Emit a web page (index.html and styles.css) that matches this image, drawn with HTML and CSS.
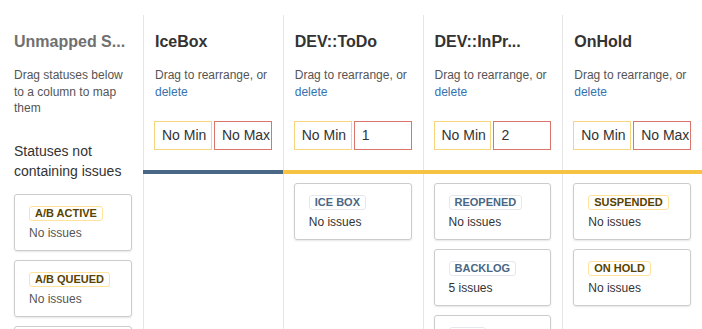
FILE: index.html
```html
<!DOCTYPE html>
<html lang="en">
<head>
  <meta charset="UTF-8">
  <meta name="viewport" content="width=device-width, initial-scale=1.0">
  <title>Board Columns</title>
  <link rel="stylesheet" href="styles.css">
</head>
<body>
  <div class="board">
    <div class="column unmapped">
      <div class="column-header">
        <h2 class="muted">Unmapped S...</h2>
        <p class="hint">Drag statuses below to a column to map them</p>
      </div>
      <div class="section-title">Statuses not containing issues</div>
      <div class="cards">
        <div class="card">
          <span class="lozenge yellow">A/B Active</span>
          <div class="count">No issues</div>
        </div>
        <div class="card">
          <span class="lozenge yellow">A/B Queued</span>
          <div class="count">No issues</div>
        </div>
        <div class="card"></div>
      </div>
    </div>

    <div class="column">
      <div class="column-header">
        <h2>IceBox</h2>
        <p class="hint">Drag to rearrange, or <a href="#">delete</a></p>
        <div class="limits">
          <div class="limit min">No Min</div>
          <div class="limit max">No Max</div>
        </div>
      </div>
      <div class="bar blue"></div>
    </div>

    <div class="column">
      <div class="column-header">
        <h2>DEV::ToDo</h2>
        <p class="hint">Drag to rearrange, or <a href="#">delete</a></p>
        <div class="limits">
          <div class="limit min">No Min</div>
          <div class="limit max">1</div>
        </div>
      </div>
      <div class="bar yellow"></div>
      <div class="cards">
        <div class="card">
          <span class="lozenge blue">Ice Box</span>
          <div class="count">No issues</div>
        </div>
      </div>
    </div>

    <div class="column">
      <div class="column-header">
        <h2>DEV::InPr...</h2>
        <p class="hint">Drag to rearrange, or <a href="#">delete</a></p>
        <div class="limits">
          <div class="limit min">No Min</div>
          <div class="limit max">2</div>
        </div>
      </div>
      <div class="bar yellow"></div>
      <div class="cards">
        <div class="card">
          <span class="lozenge blue">Reopened</span>
          <div class="count">No issues</div>
        </div>
        <div class="card">
          <span class="lozenge blue">Backlog</span>
          <div class="count">5 issues</div>
        </div>
        <div class="card">
          <span class="lozenge blue placeholder"></span>
        </div>
      </div>
    </div>

    <div class="column">
      <div class="column-header">
        <h2>OnHold</h2>
        <p class="hint">Drag to rearrange, or <a href="#">delete</a></p>
        <div class="limits">
          <div class="limit min">No Min</div>
          <div class="limit max">No Max</div>
        </div>
      </div>
      <div class="bar yellow"></div>
      <div class="cards">
        <div class="card">
          <span class="lozenge yellow">Suspended</span>
          <div class="count">No issues</div>
        </div>
        <div class="card">
          <span class="lozenge yellow">On Hold</span>
          <div class="count">No issues</div>
        </div>
      </div>
    </div>
  </div>
</body>
</html>
```

FILE: styles.css
```css
body {
  font-family: Arial, "Liberation Sans", sans-serif;
  background-color: white;
  color: #333;
  margin: 0;
  padding: 0;
  overflow: hidden;
}

.board {
  display: flex;
  height: 329px;
  padding-top: 15px;
  box-sizing: border-box;
}

.column {
  flex: 1;
  min-width: 0;
  border-left: 1px solid #e5e5e5;
}

.column.unmapped {
  flex: 0 0 143px;
  border-left: none;
}

.column-header {
  padding: 17px 11px 0 11px;
  height: 155px;
  box-sizing: border-box;
}

.unmapped .column-header {
  padding-left: 14px;
  height: auto;
}

h2 {
  margin: 0;
  font-size: 16px;
  line-height: 20px;
  font-weight: bold;
  color: #333;
  white-space: nowrap;
}

h2.muted {
  color: #707070;
}

.hint {
  margin: 15px 0 0;
  font-size: 12px;
  line-height: 16.5px;
  color: #555;
}

.hint a {
  color: #3572b0;
  text-decoration: none;
}

.limits {
  display: grid;
  grid-template-columns: 1fr 1fr;
  gap: 2px;
  margin: 21px 0 0 -1px;
}

.limit {
  height: 29px;
  box-sizing: border-box;
  padding: 0 7px;
  font-size: 14px;
  line-height: 27px;
  white-space: nowrap;
  overflow: hidden;
  color: #333;
}

.limit.min {
  border: 1px solid #f6d57e;
}

.limit.max {
  border: 1px solid #d9756a;
}

.bar {
  height: 4px;
  margin-left: -1px;
}

.bar.blue {
  background-color: #4a6785;
}

.bar.yellow {
  background-color: #f6c342;
}

.section-title {
  margin-top: 24px;
  padding-left: 14px;
  font-size: 14px;
  line-height: 20px;
  color: #333;
}

.cards {
  display: flex;
  flex-direction: column;
  gap: 9px;
  padding: 9px 11px 0 10px;
}

.unmapped .cards {
  padding: 13px 11px 0 14px;
}

.card {
  border: 1px solid #ccc;
  border-radius: 3px;
  box-shadow: 0 1px 2px rgba(0, 0, 0, 0.1);
  padding: 11px 14px 9px;
  min-height: 35px;
  flex-shrink: 0;
}

.lozenge {
  display: block;
  width: fit-content;
  height: 15px;
  box-sizing: border-box;
  padding: 0 5px;
  border: 1px solid;
  border-radius: 3px;
  font-size: 11px;
  line-height: 13px;
  font-weight: bold;
  text-transform: uppercase;
  background-color: white;
}

.lozenge.placeholder {
  width: 37px;
}

.lozenge.yellow {
  border-color: #ffe39a;
  color: #594300;
}

.lozenge.blue {
  border-color: #e4e8ed;
  color: #4a6785;
}

.count {
  margin-top: 4px;
  font-size: 12px;
  line-height: 16px;
  color: #333;
}

.unmapped .count {
  color: #555;
}
```
